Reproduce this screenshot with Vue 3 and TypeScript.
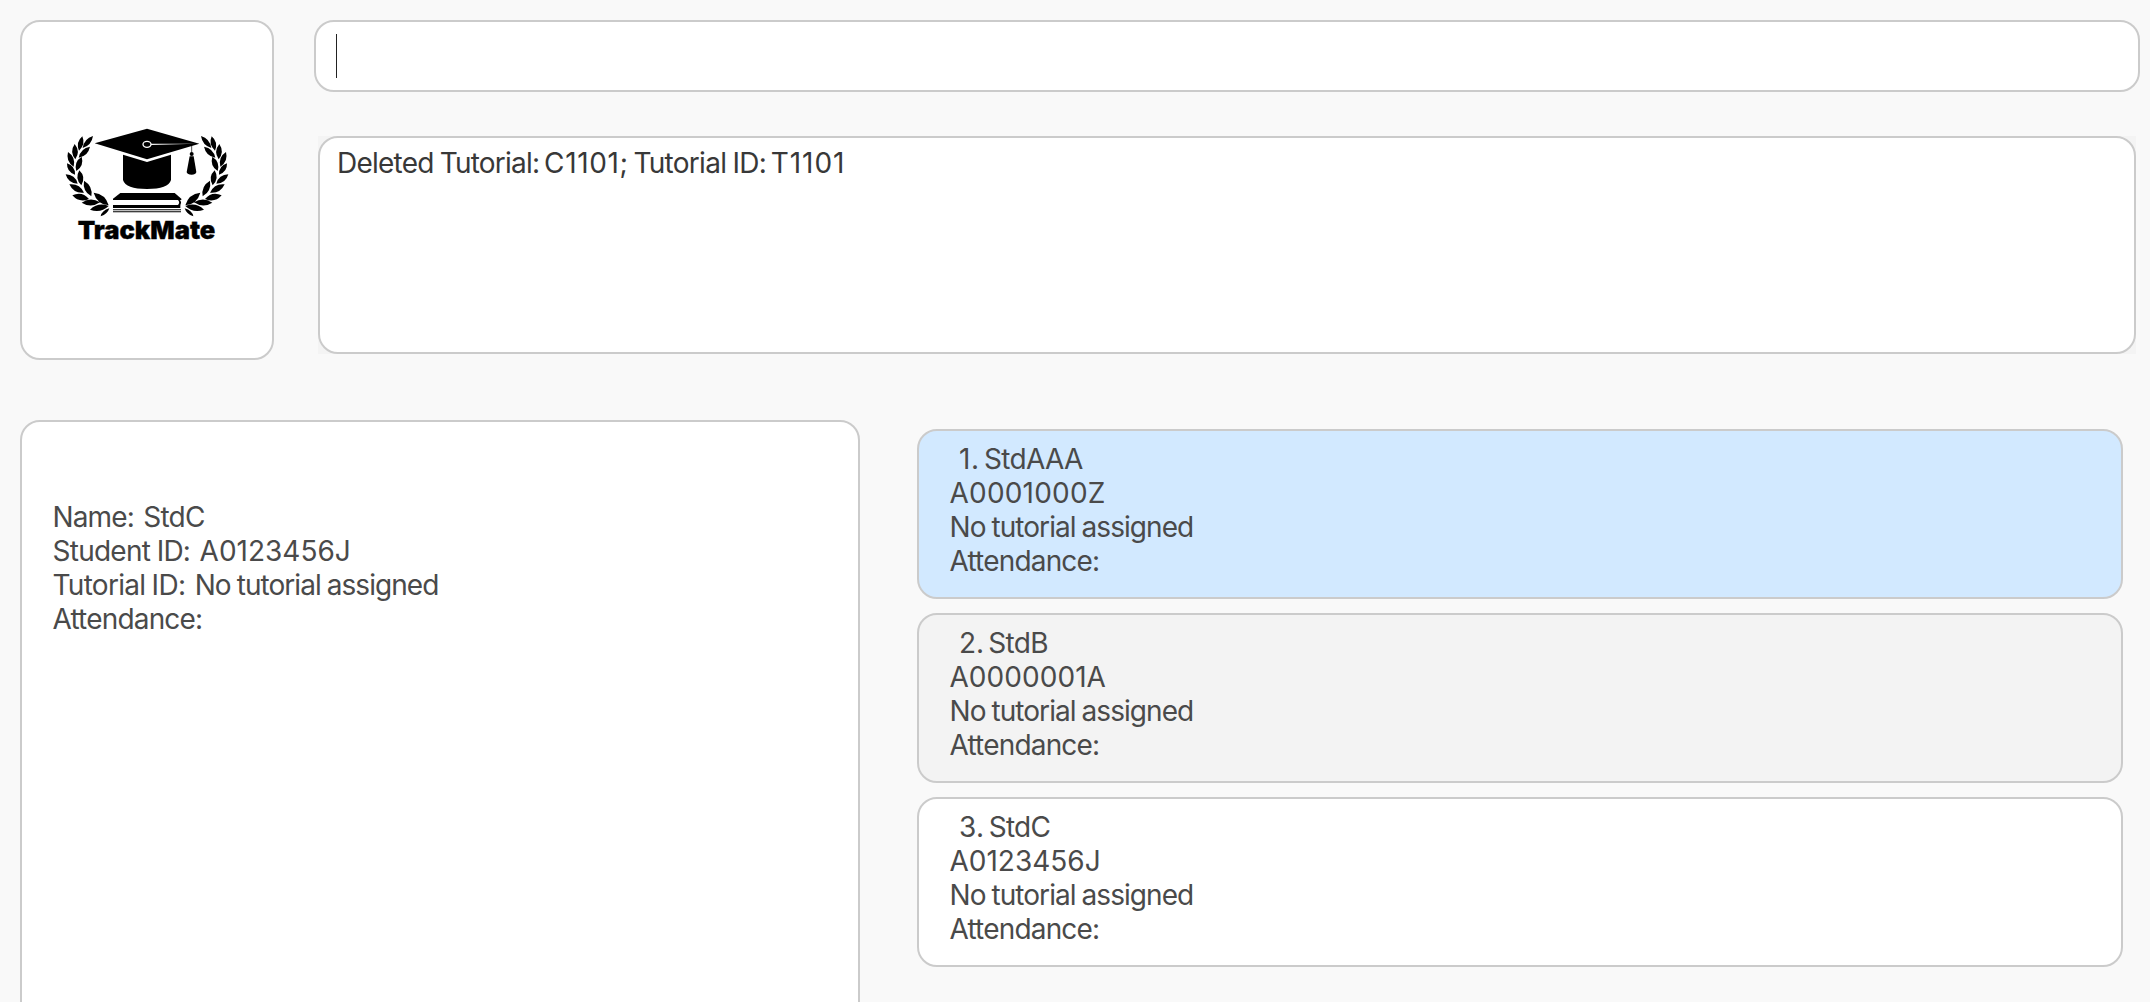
<script setup lang="ts">
interface Piece { text: string; spacing: number; word?: number }
interface Student { index: Piece; name: Piece; id: Piece; tone: string }

const tutorialLabel: Piece = { text: 'Tutorial ID:', spacing: -0.7, word: -1 }
const unassigned: Piece = { text: 'No tutorial assigned', spacing: -0.95, word: -0.9 }
const attendance: Piece = { text: 'Attendance:', spacing: -0.82 }

const message: Piece[] = [
  { text: 'Deleted Tutorial:', spacing: -0.77, word: -1 },
  { text: 'C1101;', spacing: 0.65 },
  tutorialLabel,
  { text: 'T1101', spacing: 0.9 },
]

const details: Piece[][] = [
  [{ text: 'Name:', spacing: -0.88 }, { text: 'StdC', spacing: -0.75 }],
  [{ text: 'Student ID:', spacing: -0.75, word: -0.6 }, { text: 'A0123456J', spacing: 0 }],
  [tutorialLabel, unassigned],
  [attendance],
]

const students: Student[] = [
  { index: { text: '1.', spacing: 0.7 }, name: { text: 'StdAAA', spacing: -0.7 }, id: { text: 'A0001000Z', spacing: 0.2 }, tone: 'selected' },
  { index: { text: '2.', spacing: 0 }, name: { text: 'StdB', spacing: -0.7 }, id: { text: 'A0000001A', spacing: 0.05 }, tone: 'alt' },
  { index: { text: '3.', spacing: 0.4 }, name: { text: 'StdC', spacing: -0.75 }, id: { text: 'A0123456J', spacing: 0 }, tone: 'plain' },
]

const track = (p: Piece) => ({ letterSpacing: `${p.spacing}px`, wordSpacing: `${p.word ?? 0}px` })

// Laurel leaves: tip x/y, base x/y, thickness
const leaves: number[][] = [
  [129, 78, 98, 114, 15], [97, 79, 87, 122, 16], [120, 110, 86, 143, 16], [74, 102, 76, 148, 17],
  [95, 140, 79, 183, 17], [54, 126, 71, 170, 17], [47, 193, 83, 221, 17], [51, 160, 75, 194, 16],
  [88, 181, 94, 226, 18], [58, 223, 102, 248, 18], [102, 212, 124, 259, 18], [67, 256, 117, 267, 19],
  [95, 278, 150, 277, 18], [131, 248, 176, 286, 20], [120, 299, 176, 288, 18],
]
function leaf([x1, y1, x2, y2, w]: number[]): string {
  const len = Math.hypot(x2 - x1, y2 - y1)
  const nx = (-(y2 - y1) / len) * w
  const ny = ((x2 - x1) / len) * w
  const mx = (x1 + x2) / 2
  const my = (y1 + y2) / 2
  return `M${x1} ${y1}Q${mx + nx} ${my + ny} ${x2} ${y2}Q${mx - nx} ${my - ny} ${x1} ${y1}Z`
}
const laurel = leaves.map(leaf).join('') + 'M152 319Q155 302 178 295Q173 312 152 319Z'
</script>

<template>
  <main class="app">
    <section class="top">
      <div class="panel brand">
        <svg class="logo" viewBox="0 0 570 450" role="img" aria-label="TrackMate">
          <path :d="laurel" />
          <path :d="laurel" transform="translate(582 0) scale(-1 1)" />
          <path d="M134 100L291 56L448 101L291 148Z" />
          <path d="M219 134L291 156L363 134V210Q355 237 291 237Q227 237 219 210Z" />
          <path d="M303 101L437 101L303 105Z" fill="#fff" />
          <ellipse cx="291" cy="103" rx="12" ry="9" fill="#000" stroke="#fff" stroke-width="4" />
          <path d="M425 105V128" stroke="#000" stroke-width="2" />
          <circle cx="425" cy="132" r="6" />
          <path d="M419 139H431L439 186Q437 194 425 194Q412 194 410 187Z" />
          <path d="M211 249H374L394 266V270H189V266Z" />
          <path d="M376 268H387Q399 276 388 290H376V285H384Q391 278 384 270Z" />
          <path d="M189 285H391V294H189ZM189 298H393V301H189ZM189 304H393V307H189Z" />
          <text x="83" y="388" textLength="413" lengthAdjust="spacingAndGlyphs">TrackMate</text>
        </svg>
      </div>
      <div class="right">
        <div class="panel command"><span class="caret"></span></div>
        <div class="backdrop">
          <div class="panel result">
            <span v-for="p in message" :key="p.text" :style="track(p)">{{ p.text }}</span>
          </div>
        </div>
      </div>
    </section>
    <section class="bottom">
      <div class="panel details">
        <div v-for="(row, i) in details" :key="i" class="row">
          <span v-for="p in row" :key="p.text" :style="track(p)">{{ p.text }}</span>
        </div>
      </div>
      <div class="list">
        <div v-for="s in students" :key="s.index.text" class="panel card" :class="s.tone">
          <div class="row title">
            <span :style="track(s.index)">{{ s.index.text }}</span>
            <span :style="track(s.name)">{{ s.name.text }}</span>
          </div>
          <div class="row"><span :style="track(s.id)">{{ s.id.text }}</span></div>
          <div class="row"><span :style="track(unassigned)">{{ unassigned.text }}</span></div>
          <div class="row"><span :style="track(attendance)">{{ attendance.text }}</span></div>
        </div>
      </div>
    </section>
  </main>
</template>

<style>
body {
  background: #f9f9f9;
}
</style>

<style scoped>
.app {
  box-sizing: border-box;
  height: 1002px;
  overflow: hidden;
  padding: 20px 10px 0 20px;
  background: #f9f9f9;
  color: #4a4a4a;
  font: 28px/34px Inter, "Liberation Sans", sans-serif;
  white-space: nowrap;
}
.panel {
  box-sizing: border-box;
  border: 2px solid #cbcbcb;
  border-radius: 20px;
  background: #fff;
}
.top {
  display: flex;
  gap: 40px;
}
.brand {
  width: 254px;
  height: 340px;
  padding: 88px 0 0 28px;
}
.logo {
  display: block;
  width: 190px;
  height: 150px;
}
.logo text {
  font: 900 73px Inter, sans-serif;
  stroke: #000;
  stroke-width: 1px;
}
.right {
  flex: 1;
  display: flex;
  flex-direction: column;
  gap: 44px;
}
.command {
  height: 72px;
  padding: 12px 20px;
}
.caret {
  display: block;
  width: 1px;
  height: 44px;
  background: #222;
}
.backdrop {
  margin: 0 4px;
  background: #f4f4f4;
}
.result {
  display: flex;
  gap: 4.7px;
  height: 218px;
  padding: 8px 17px;
  color: #383838;
}
.bottom {
  display: flex;
  gap: 57px;
  margin-top: 60px;
}
.details {
  width: 840px;
  height: 640px;
  padding: 78px 30px 0 30.5px;
}
.row {
  display: flex;
  gap: 9.4px;
  height: 34px;
}
.list {
  display: flex;
  flex-direction: column;
  gap: 14px;
  width: 1206px;
  padding-top: 9px;
}
.card {
  height: 170px;
  padding: 11px 30px 0 30.5px;
}
.title {
  gap: 4.2px;
  padding-left: 9.5px;
}
.selected {
  background: #d2e9ff;
}
.alt {
  background: #f3f3f3;
}
</style>
